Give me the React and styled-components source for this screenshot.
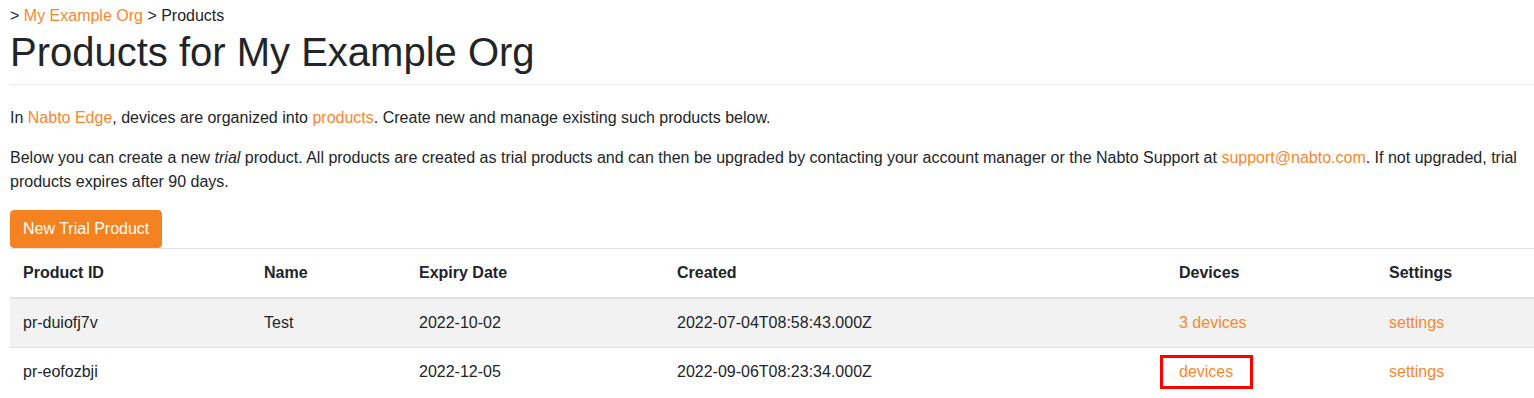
import React from 'react';
import styled, { createGlobalStyle } from 'styled-components';

const GlobalStyle = createGlobalStyle`
  html, body {
    margin: 0;
    padding: 0;
    background: #ffffff;
  }
  body {
    font-family: "Liberation Sans", Arial, Helvetica, sans-serif;
    font-size: 16px;
    line-height: 1.5;
    color: #212529;
  }
  * {
    box-sizing: border-box;
  }
`;

const Page = styled.main`
  padding: 4px 0 0 10px;
`;

const Crumbs = styled.nav`
  line-height: 24px;
`;

const Link = styled.a`
  color: #f7882f;
  text-decoration: none;
  cursor: pointer;
`;

const Title = styled.h1`
  margin: 0 0 8px;
  font-size: 40px;
  font-weight: 400;
  line-height: 48px;
`;

const Rule = styled.hr`
  margin: 3px 0 21px;
  border: 0;
  border-top: 1px solid #e9ecef;
`;

const Text = styled.p`
  margin: 0 0 ${p => p.$gap || 15}px;
  padding-right: 10px;
  line-height: 24.5px;
`;

const Button = styled.button`
  display: inline-block;
  height: 38px;
  padding: 6px 12px;
  border: 1px solid #f58220;
  border-radius: 4px;
  background: #f58220;
  color: #ffffff;
  font-family: inherit;
  font-size: 16px;
  line-height: 24px;
  cursor: pointer;
`;

const Table = styled.table`
  width: 100%;
  margin-top: 0;
  border-collapse: collapse;
  table-layout: fixed;
`;

const Head = styled.th`
  padding: 12px 12px 12px 13px;
  border-top: 1px solid #dee2e6;
  border-bottom: 2px solid #dee2e6;
  text-align: left;
  font-weight: 700;
  line-height: 24px;
  width: ${p => p.$width}px;
`;

const Row = styled.tr`
  background: ${p => (p.$striped ? '#f2f2f2' : 'transparent')};
`;

const Cell = styled.td`
  padding: 12px 12px 12px 13px;
  border-top: ${p => (p.$first ? '0' : '1px solid #dee2e6')};
  line-height: 24px;
`;

const Marked = styled.span`
  position: relative;
  &::after {
    content: '';
    position: absolute;
    left: -19px;
    right: -20px;
    top: -8px;
    bottom: -9px;
    border: 3px solid #ff0000;
    pointer-events: none;
  }
`;

const columns = [
  { label: 'Product ID', width: 241 },
  { label: 'Name', width: 155 },
  { label: 'Expiry Date', width: 258 },
  { label: 'Created', width: 502 },
  { label: 'Devices', width: 210 },
  { label: 'Settings', width: 158 },
];

const products = [
  { id: 'pr-duiofj7v', name: 'Test', expiry: '2022-10-02', created: '2022-07-04T08:58:43.000Z', devices: '3 devices' },
  { id: 'pr-eofozbji', name: '', expiry: '2022-12-05', created: '2022-09-06T08:23:34.000Z', devices: 'devices', marked: true },
];

const App = () => (
  <>
    <GlobalStyle />
    <Page>
      <Crumbs>
        &gt; <Link>My Example Org</Link> &gt; Products
      </Crumbs>
      <Title>Products for My Example Org</Title>
      <Rule />
      <Text>
        In <Link>Nabto Edge</Link>, devices are organized into <Link>products</Link>. Create new and manage existing such products below.
      </Text>
      <Text>
        Below you can create a new <em>trial</em> product. All products are created as trial products and can then be upgraded by contacting your account manager or the Nabto Support at <Link>support@nabto.com</Link>. If not upgraded, trial products expires after 90 days.
      </Text>
      <Button>New Trial Product</Button>
      <Table>
        <thead>
          <tr>
            {columns.map(c => (
              <Head key={c.label} $width={c.width}>{c.label}</Head>
            ))}
          </tr>
        </thead>
        <tbody>
          {products.map((p, i) => (
            <Row key={p.id} $striped={i % 2 === 0}>
              <Cell $first={i === 0}>{p.id}</Cell>
              <Cell $first={i === 0}>{p.name}</Cell>
              <Cell $first={i === 0}>{p.expiry}</Cell>
              <Cell $first={i === 0}>{p.created}</Cell>
              <Cell $first={i === 0}>
                {p.marked ? (
                  <Marked><Link>{p.devices}</Link></Marked>
                ) : (
                  <Link>{p.devices}</Link>
                )}
              </Cell>
              <Cell $first={i === 0}><Link>settings</Link></Cell>
            </Row>
          ))}
        </tbody>
      </Table>
    </Page>
  </>
);

export default App;
